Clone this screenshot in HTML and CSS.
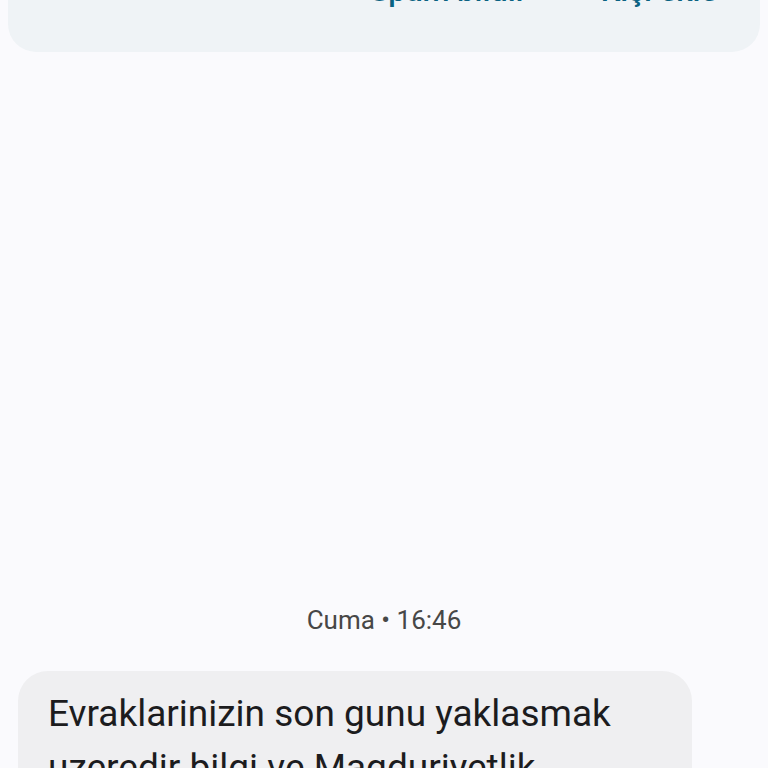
FILE: index.html
```html
<!DOCTYPE html>
<html>
<head>
<meta charset="utf-8">
<link rel="stylesheet" href="styles.css">
</head>
<body>
<div class="page">
  <div class="card">
    <div class="actions">
      <span class="action">Spam bildir</span>
      <span class="action">Kişi ekle</span>
    </div>
  </div>
  <div class="spacer"></div>
  <div class="stamp">Cuma • 16:46</div>
  <div class="bubble">Evraklarinizin son gunu yaklasmak uzeredir bilgi ve Magduriyetlik yasamamak icin</div>
</div>
</body>
</html>
```
FILE: styles.css
```css
html, body {
  margin: 0;
  padding: 0;
  background: #fafafd;
  overflow: hidden;
}
.page {
  width: 768px;
  height: 768px;
  display: flex;
  flex-direction: column;
  font-family: Roboto, "Noto Sans", sans-serif;
  overflow: hidden;
}
.page > * {
  flex: none;
}
.card {
  margin: -60px 8px 0 8px;
  height: 112px;
  background: #eff3f6;
  border-radius: 0 0 28px 28px;
  display: flex;
  justify-content: flex-end;
  align-items: flex-start;
  padding-right: 43px;
  box-sizing: border-box;
}
.actions {
  display: flex;
  gap: 74px;
  margin-top: 33px;
}
.action {
  font-size: 31px;
  font-weight: 500;
  color: #0a6282;
  line-height: 36px;
}
.spacer {
  height: 553px;
}
.stamp {
  text-align: center;
  font-size: 26px;
  color: #474747;
  line-height: 30px;
}
.bubble {
  margin: 36px 0 0 18px;
  width: 674px;
  box-sizing: border-box;
  background: #efeff1;
  border-radius: 30px;
  padding: 16px 30px 20px 30px;
  font-size: 37px;
  line-height: 54px;
  color: #1c1c1e;
}
```
